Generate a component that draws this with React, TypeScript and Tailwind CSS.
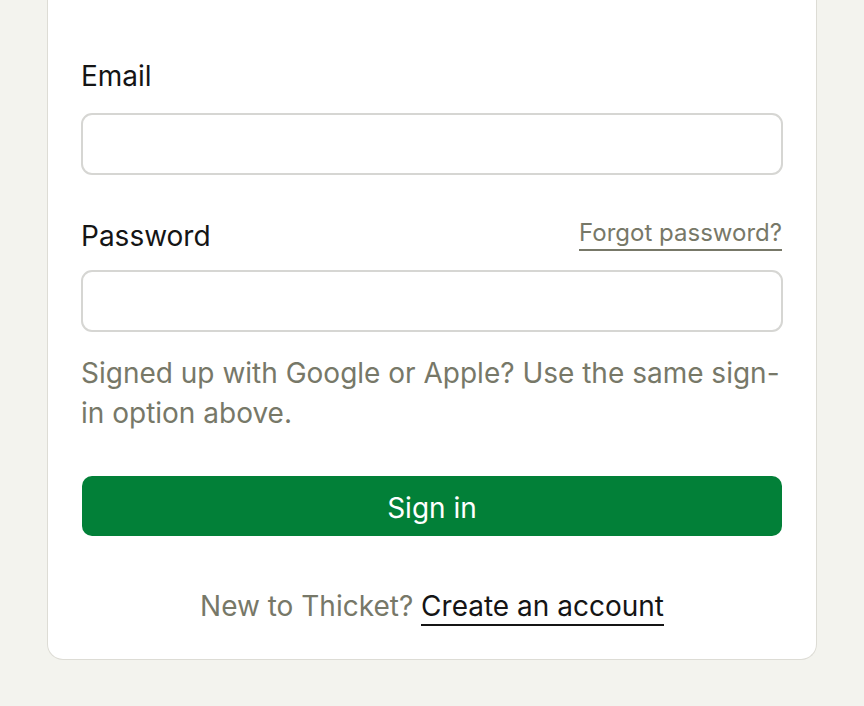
export default function App() {
  return (
    <div className="min-h-[706px] w-full bg-[#f3f3ee] flex justify-center items-start" style={{ fontFamily: 'Inter, "Noto Sans", sans-serif' }}>
      <div className="w-[770px] bg-white border border-t-0 border-[#dddcd5] rounded-b-[16px] px-[33px] pt-[56px] pb-[33px] flex flex-col">
        <label className="text-[28px] leading-[40px] font-normal text-[#151515]">Email</label>
        <input className="mt-[17px] h-[62px] shrink-0 w-full rounded-[11px] border-2 border-[#d6d6d3] bg-white outline-none" />
        <div className="mt-[41px] flex items-center justify-between">
          <span className="text-[28px] leading-[40px] font-normal text-[#151515]">Password</span>
          <a className="text-[24px] leading-[32px] text-[#777868] border-b-2 border-[#777868] -mt-[4px] mr-px">Forgot password?</a>
        </div>
        <input type="password" className="mt-[14px] h-[62px] shrink-0 w-full rounded-[11px] border-2 border-[#d6d6d3] bg-white outline-none" />
        <p className="mt-[21px] text-[28px] leading-[40px] text-[#777868]">
          Signed up with Google or Apple? Use the same sign-in option above.
        </p>
        <button className="mt-[43px] mx-px h-[60px] shrink-0 pt-[3px] rounded-[10px] bg-[#028038] text-white text-[28px] font-normal">
          Sign in
        </button>
        <div className="mt-[50px] text-center text-[28px] leading-[40px] text-[#777868]">
          New to Thicket?{' '}
          <a className="text-[#151515] border-b-2 border-[#151515] pb-px">Create an account</a>
        </div>
      </div>
    </div>
  );
}
